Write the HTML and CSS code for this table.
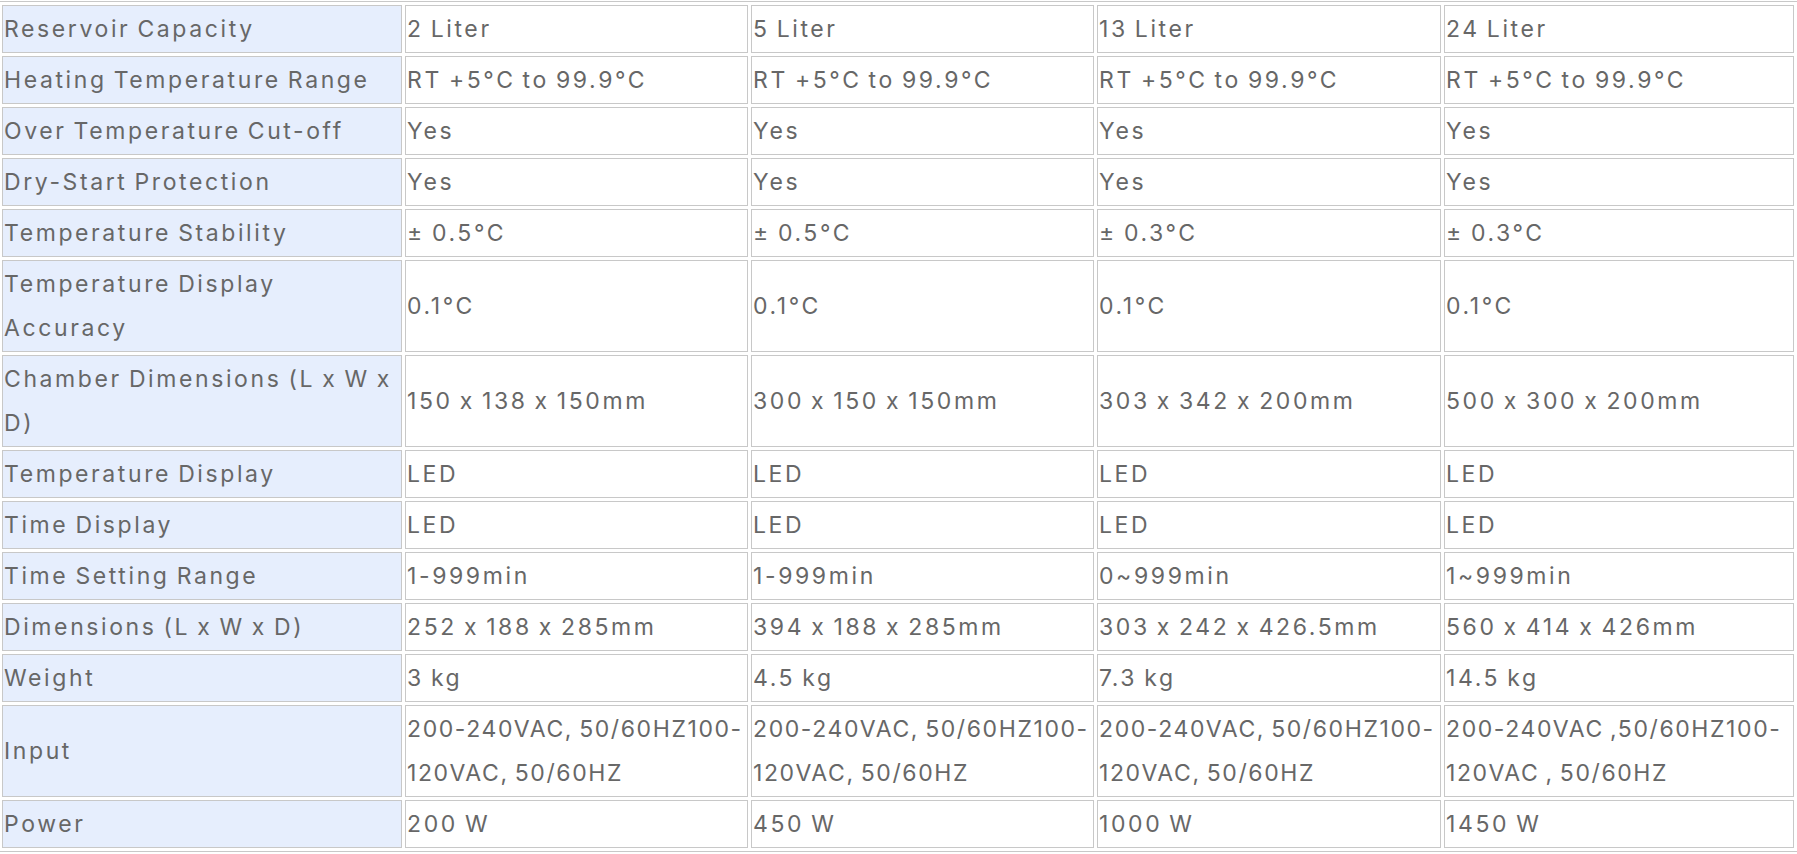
FILE: index.html
```html
<!DOCTYPE html>
<html lang="en">
<head>
<meta charset="utf-8">
<title>Specifications</title>
<link rel="stylesheet" href="styles.css">
</head>
<body>
<table class="spec">
  <colgroup>
    <col class="c-label">
    <col class="c-a">
    <col class="c-b">
    <col class="c-c">
    <col class="c-d">
  </colgroup>
  <tbody>
    <tr><td class="label">Reservoir Capacity</td><td>2 Liter</td><td>5 Liter</td><td>13 Liter</td><td>24 Liter</td></tr>
    <tr><td class="label">Heating Temperature Range</td><td>RT +5°C to 99.9°C</td><td>RT +5°C to 99.9°C</td><td>RT +5°C to 99.9°C</td><td>RT +5°C to 99.9°C</td></tr>
    <tr><td class="label">Over Temperature Cut-off</td><td>Yes</td><td>Yes</td><td>Yes</td><td>Yes</td></tr>
    <tr><td class="label">Dry-Start Protection</td><td>Yes</td><td>Yes</td><td>Yes</td><td>Yes</td></tr>
    <tr><td class="label">Temperature Stability</td><td>± 0.5°C</td><td>± 0.5°C</td><td>± 0.3°C</td><td>± 0.3°C</td></tr>
    <tr><td class="label">Temperature Display Accuracy</td><td>0.1°C</td><td>0.1°C</td><td>0.1°C</td><td>0.1°C</td></tr>
    <tr><td class="label">Chamber Dimensions (L x W x D)</td><td>150 x 138 x 150mm</td><td>300 x 150 x 150mm</td><td>303 x 342 x 200mm</td><td>500 x 300 x 200mm</td></tr>
    <tr><td class="label">Temperature Display</td><td>LED</td><td>LED</td><td>LED</td><td>LED</td></tr>
    <tr><td class="label">Time Display</td><td>LED</td><td>LED</td><td>LED</td><td>LED</td></tr>
    <tr><td class="label">Time Setting Range</td><td>1-999min</td><td>1-999min</td><td>0~999min</td><td>1~999min</td></tr>
    <tr><td class="label">Dimensions (L x W x D)</td><td>252 x 188 x 285mm</td><td>394 x 188 x 285mm</td><td>303 x 242 x 426.5mm</td><td>560 x 414 x 426mm</td></tr>
    <tr><td class="label">Weight</td><td>3 kg</td><td>4.5 kg</td><td>7.3 kg</td><td>14.5 kg</td></tr>
    <tr><td class="label">Input</td><td class="nb">200-240VAC, 50/60HZ100-<wbr>120VAC, 50/60HZ</td><td class="nb">200-240VAC, 50/60HZ100-<wbr>120VAC, 50/60HZ</td><td class="nb">200-240VAC, 50/60HZ100-<wbr>120VAC, 50/60HZ</td><td class="nb">200-240VAC ,50/60HZ100-<wbr>120VAC , 50/60HZ</td></tr>
    <tr><td class="label">Power</td><td>200 W</td><td>450 W</td><td>1000 W</td><td>1450 W</td></tr>
  </tbody>
</table>
</body>
</html>
```
FILE: styles.css
```css
html, body {
  margin: 0;
  padding: 0;
  background: #ffffff;
}

body {
  overflow: hidden;
}

.spec {
  table-layout: fixed;
  width: 1798px;
  margin: 1px 0 0 -1px;
  border-collapse: separate;
  border-spacing: 3px;
  border-top: 1px solid #c8c8c8;
  border-bottom: 1px solid #c8c8c8;
  font-family: Inter, "DejaVu Sans", sans-serif;
  font-size: 23px;
  font-variant-numeric: proportional-nums;
  letter-spacing: 2.6px;
  word-spacing: -2px;
  line-height: 44px;
  color: #676767;
}

.c-label { width: 400px; }
.c-a { width: 343px; }
.c-b { width: 343px; }
.c-c { width: 344px; }
.c-d { width: 350px; }

.spec td {
  border: 1px solid #c8c8c8;
  padding: 1px;
  vertical-align: middle;
  text-align: left;
  word-wrap: break-word;
}

.spec td.nb {
  letter-spacing: 1.6px;
}

.spec td.label {
  background: #e6eefd;
}
```
